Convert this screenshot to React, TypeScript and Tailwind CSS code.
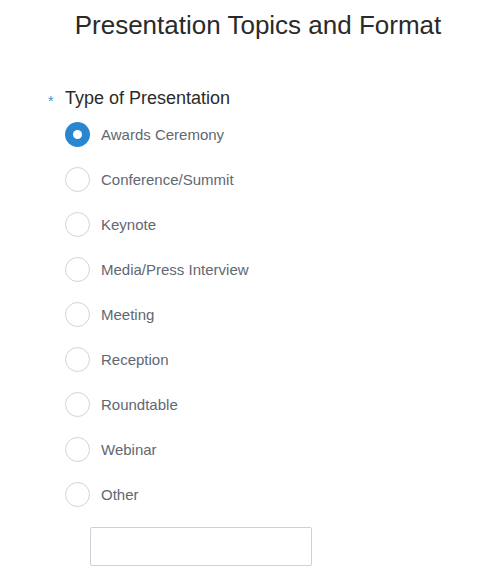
import { useState } from "react";

const PRESENTATION_TYPES = [
  "Awards Ceremony",
  "Conference/Summit",
  "Keynote",
  "Media/Press Interview",
  "Meeting",
  "Reception",
  "Roundtable",
  "Webinar",
  "Other",
];

function RadioOption({
  label,
  checked,
  onSelect,
}: {
  label: string;
  checked: boolean;
  onSelect: () => void;
}) {
  return (
    <label className="flex h-[45px] cursor-pointer items-center gap-[11px]">
      <input
        type="radio"
        name="presentation-type"
        className="sr-only"
        checked={checked}
        onChange={onSelect}
      />
      {checked ? (
        <span className="flex h-[25px] w-[25px] items-center justify-center rounded-full bg-[#2a86cf]">
          <span className="h-[9px] w-[9px] rounded-full bg-white" />
        </span>
      ) : (
        <span className="h-[25px] w-[25px] rounded-full border border-[#d4d4d4] bg-white" />
      )}
      <span className="text-[15px] leading-5 text-[#5f6873]">{label}</span>
    </label>
  );
}

export default function App() {
  const [selected, setSelected] = useState("Awards Ceremony");

  return (
    <main className="min-h-[580px] w-[496px] bg-white font-['Liberation_Sans',Arial,sans-serif]">
      <h1 className="pl-5 pt-[10px] text-center text-[26px] leading-[30px] text-[#2a2a2a]">
        Presentation Topics and Format
      </h1>

      <section className="mt-[46px] pl-[48px]">
        <div className="flex h-6 items-center">
          <span className="w-[17px] translate-y-[3px] text-[14px] leading-6 text-[#3a8fd6]">*</span>
          <h2 className="text-[18px] leading-6 text-[#2b2b2b]">Type of Presentation</h2>
        </div>

        <div className="ml-[17px] mt-[2px] flex flex-col">
          {PRESENTATION_TYPES.map((type) => (
            <RadioOption
              key={type}
              label={type}
              checked={selected === type}
              onSelect={() => setSelected(type)}
            />
          ))}
        </div>

        <input
          type="text"
          className="ml-[42px] mt-[10px] h-[39px] w-[222px] rounded-[2px] border border-[#cfd0da] bg-white px-2 text-[15px] outline-none"
        />
      </section>
    </main>
  );
}
